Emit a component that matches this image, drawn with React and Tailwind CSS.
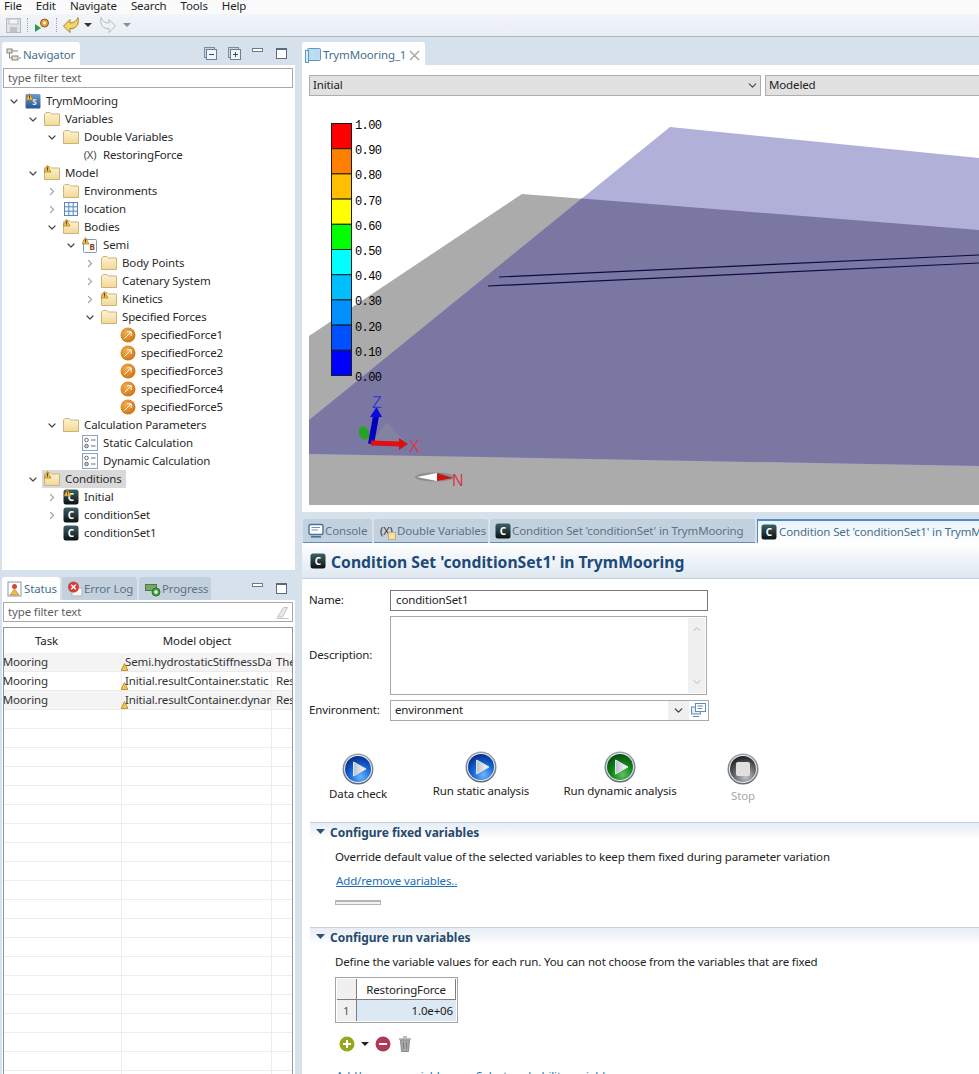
import { ChevronDown, ChevronRight, ChevronUp } from 'lucide-react';

const indents = ['pl-[6px]', 'pl-[25px]', 'pl-[44px]', 'pl-[63px]', 'pl-[82px]', 'pl-[101px]'];

const treeRows = [
  { level: 0, arrow: 'open', icon: 'root', label: 'TrymMooring' },
  { level: 1, arrow: 'open', icon: 'folder', label: 'Variables' },
  { level: 2, arrow: 'open', icon: 'folder', label: 'Double Variables' },
  { level: 3, icon: 'x', label: 'RestoringForce' },
  { level: 1, arrow: 'open', icon: 'warnFolder', label: 'Model' },
  { level: 2, arrow: 'closed', icon: 'folder', label: 'Environments' },
  { level: 2, arrow: 'closed', icon: 'grid', label: 'location' },
  { level: 2, arrow: 'open', icon: 'warnFolder', label: 'Bodies' },
  { level: 3, arrow: 'open', icon: 'body', label: 'Semi' },
  { level: 4, arrow: 'closed', icon: 'folder', label: 'Body Points' },
  { level: 4, arrow: 'closed', icon: 'folder', label: 'Catenary System' },
  { level: 4, arrow: 'closed', icon: 'warnFolder', label: 'Kinetics' },
  { level: 4, arrow: 'open', icon: 'folder', label: 'Specified Forces' },
  { level: 5, icon: 'force', label: 'specifiedForce1' },
  { level: 5, icon: 'force', label: 'specifiedForce2' },
  { level: 5, icon: 'force', label: 'specifiedForce3' },
  { level: 5, icon: 'force', label: 'specifiedForce4' },
  { level: 5, icon: 'force', label: 'specifiedForce5' },
  { level: 2, arrow: 'open', icon: 'folder', label: 'Calculation Parameters' },
  { level: 3, icon: 'calc', label: 'Static Calculation' },
  { level: 3, icon: 'calc', label: 'Dynamic Calculation' },
  { level: 1, arrow: 'open', icon: 'warnFolder', label: 'Conditions', selected: true },
  { level: 2, arrow: 'closed', icon: 'warnC', label: 'Initial' },
  { level: 2, arrow: 'closed', icon: 'c', label: 'conditionSet' },
  { level: 2, icon: 'c', label: 'conditionSet1' },
];

const legend = [
  ['#ff0000', '1.00'],
  ['#ff7f00', '0.90'],
  ['#ffbf00', '0.80'],
  ['#ffff00', '0.70'],
  ['#00ff00', '0.60'],
  ['#00ffff', '0.50'],
  ['#00bfff', '0.40'],
  ['#0090ff', '0.30'],
  ['#0050ff', '0.20'],
  ['#0000ff', '0.10'],
];

const statusRows = [
  { model: 'Semi.hydrostaticStiffnessData', info: 'The', shaded: true },
  { model: 'Initial.resultContainer.static', info: 'Res' },
  { model: 'Initial.resultContainer.dynamic', info: 'Res', shaded: true },
];

function WarnMark({ x = 0, y = 0 }) {
  return (
    <g transform={`translate(${x} ${y})`}>
      <path d="M3.5 0.5 L7 7 H0 Z" fill="#f6c445" stroke="#a9791a" strokeWidth="0.7" />
      <path d="M3.5 2.4 V4.8 M3.5 5.4 V6.2" stroke="#3a2a08" strokeWidth="0.9" />
    </g>
  );
}

function Folder({ warn }) {
  return (
    <svg className="shrink-0" width="16" height="16" viewBox="0 0 16 16">
      <defs>
        <linearGradient id="folderFill" x1="0" y1="0" x2="0" y2="1">
          <stop offset="0" stopColor="#fdf3d3" />
          <stop offset="1" stopColor="#f3d894" />
        </linearGradient>
      </defs>
      <path d="M0.5 14.5 V3 L2 1.5 H6 L7.5 3 H15.5 V14.5 Z" fill="url(#folderFill)" stroke="#cdb27a" />
      {warn && <WarnMark x={0} y={0} />}
    </svg>
  );
}

function CIcon({ warn }) {
  return (
    <svg className="shrink-0" width="16" height="16" viewBox="0 0 16 16">
      <defs>
        <linearGradient id="cFill" x1="0" y1="0" x2="0" y2="1">
          <stop offset="0" stopColor="#3d6066" />
          <stop offset="1" stopColor="#0b1214" />
        </linearGradient>
      </defs>
      <rect x="0.5" y="0.5" width="15" height="15" rx="2.5" fill="url(#cFill)" />
      <text x="8" y="12" textAnchor="middle" fontSize="10" fontWeight="700" fill="#fff" fontFamily="Noto Sans, sans-serif">C</text>
      {warn && <WarnMark x={1} y={0} />}
    </svg>
  );
}

function ForceIcon() {
  return (
    <svg className="shrink-0" width="16" height="16" viewBox="0 0 16 16">
      <defs>
        <radialGradient id="forceFill" cx="0.4" cy="0.35" r="0.75">
          <stop offset="0" stopColor="#f2ae4e" />
          <stop offset="1" stopColor="#c96d10" />
        </radialGradient>
      </defs>
      <circle cx="8" cy="8" r="7.5" fill="url(#forceFill)" />
      <path d="M4.5 11.5 L11 5 M7 4.8 H11.2 V9" fill="none" stroke="#fff" strokeWidth="1" />
    </svg>
  );
}

function CalcIcon() {
  return (
    <svg className="shrink-0" width="16" height="16" viewBox="0 0 16 16">
      <rect x="0.5" y="0.5" width="15" height="15" fill="#fbfcfe" stroke="#8ba3bc" />
      <circle cx="4.5" cy="5" r="1.8" fill="none" stroke="#6a6f76" />
      <circle cx="4.5" cy="11" r="1.8" fill="#c8ccd0" stroke="#6a6f76" />
      <path d="M9 5 H13.5 M9 11 H13.5" stroke="#6a6f76" />
    </svg>
  );
}

function GridIcon() {
  return (
    <svg className="shrink-0" width="16" height="16" viewBox="0 0 16 16">
      <rect x="1.5" y="1.5" width="13" height="13" fill="#f4f8fc" stroke="#5b86b8" />
      <path d="M5.8 1.5 V14.5 M10.2 1.5 V14.5 M1.5 5.8 H14.5 M1.5 10.2 H14.5" stroke="#5b86b8" />
    </svg>
  );
}

function RootIcon() {
  return (
    <svg className="shrink-0" width="16" height="16" viewBox="0 0 16 16">
      <defs>
        <linearGradient id="rootFill" x1="0" y1="0" x2="0" y2="1">
          <stop offset="0" stopColor="#6f9bd0" />
          <stop offset="1" stopColor="#24568f" />
        </linearGradient>
      </defs>
      <rect x="0.5" y="1" width="15" height="14.5" rx="1.5" fill="url(#rootFill)" />
      <text x="9.5" y="12" textAnchor="middle" fontSize="8" fontWeight="700" fill="#e8eef5" fontFamily="Noto Sans, sans-serif">S</text>
      <WarnMark x={1} y={0} />
    </svg>
  );
}

function BodyIcon() {
  return (
    <svg className="shrink-0" width="16" height="16" viewBox="0 0 16 16">
      <rect x="1.5" y="2.5" width="13" height="13" rx="1" fill="#fbfcfe" stroke="#7f9dbd" />
      <text x="10" y="12.5" textAnchor="middle" fontSize="8" fontWeight="700" fill="#8a3a2a" fontFamily="Noto Sans, sans-serif">B</text>
      <WarnMark x={0} y={0} />
    </svg>
  );
}

function TreeIcon({ kind }) {
  if (kind === 'folder') return <Folder />;
  if (kind === 'warnFolder') return <Folder warn />;
  if (kind === 'c') return <CIcon />;
  if (kind === 'warnC') return <CIcon warn />;
  if (kind === 'force') return <ForceIcon />;
  if (kind === 'calc') return <CalcIcon />;
  if (kind === 'grid') return <GridIcon />;
  if (kind === 'root') return <RootIcon />;
  if (kind === 'body') return <BodyIcon />;
  return <span className="block w-4 text-center text-[11px] leading-4 text-[#4a4a4a] whitespace-nowrap">(X)</span>;
}

function TreeRow({ row }) {
  return (
    <div className={`h-[18px] flex items-center ${indents[row.level]}`}>
      <span className="w-[12px] mr-[3px] shrink-0 flex justify-center">
        {row.arrow === 'open' && <ChevronDown size={13} strokeWidth={2.4} className="text-[#484848]" />}
        {row.arrow === 'closed' && <ChevronRight size={13} strokeWidth={2.4} className="text-[#a6a6a6]" />}
      </span>
      <span className={`flex items-center h-[18px] pl-[2px] pr-[4px] ${row.selected ? 'bg-[#d9d9d9]' : ''}`}>
        <TreeIcon kind={row.icon} />
        <span className="ml-[5px] text-[#2a2a2a] whitespace-nowrap">{row.label}</span>
      </span>
    </div>
  );
}

function WindowButtons() {
  return (
    <div className="flex items-center gap-[13px]">
      <svg className="mb-[6px]" width="11" height="5" viewBox="0 0 11 5"><rect x="0.5" y="0.5" width="10" height="3" fill="#fff" stroke="#6c7a88" /></svg>
      <svg width="11" height="11" viewBox="0 0 11 11"><rect x="0.5" y="0.5" width="10" height="10" fill="#fff" stroke="#5d6b79" /><path d="M0.5 1.5 H10.5" stroke="#5d6b79" /></svg>
    </div>
  );
}

function FilterInput({ clear }) {
  return (
    <div className="ml-[1px] mr-[2px] h-[20px] border border-[#a5a9ad] bg-white flex items-center pl-[4px] pr-[3px] justify-between text-[#5f5f5f]">
      <span>type filter text</span>
      {clear && (
        <svg width="13" height="13" viewBox="0 0 13 13">
          <path d="M1.5 11 L7.5 1.5 H11.5 L6.5 11 Z" fill="#e9e9e9" stroke="#c4c4c4" />
          <path d="M0.5 12.5 H12.5" stroke="#c4c4c4" />
        </svg>
      )}
    </div>
  );
}

function ViewTab({ active, icon, label, className = '' }) {
  return (
    <div className={`h-full rounded-t-[3px] flex items-center whitespace-nowrap shrink-0 ${active ? 'bg-white text-[#46708f]' : 'bg-[#c3d1de] text-[#5f7283]'} ${className}`}>
      {icon}
      <span className="ml-[1px]">{label}</span>
    </div>
  );
}

function NavigatorGlyph() {
  return (
    <svg className="shrink-0" width="16" height="16" viewBox="0 0 16 16">
      <rect x="1" y="2" width="5" height="4" fill="#f4dfa5" stroke="#7a8795" />
      <rect x="6" y="9" width="6" height="4" fill="#f4dfa5" stroke="#7a8795" />
      <path d="M3.5 6 V11 H6 M6 4 H12 M13 11 H15" stroke="#7a8795" fill="none" />
    </svg>
  );
}

function StatusGlyph() {
  return (
    <svg className="shrink-0" width="16" height="16" viewBox="0 0 16 16">
      <rect x="1" y="1" width="13" height="14" fill="#fff" stroke="#8a97a5" />
      <circle cx="7.5" cy="5.5" r="2.5" fill="#d8433b" />
      <path d="M7.5 8 L12 14 H3 Z" fill="#f3b94a" stroke="#a9791a" strokeWidth="0.6" />
    </svg>
  );
}

function ErrorGlyph() {
  return (
    <svg className="shrink-0" width="16" height="16" viewBox="0 0 16 16">
      <rect x="5" y="7" width="10" height="8" fill="#f4f4f4" stroke="#b8b8b8" />
      <circle cx="6.5" cy="6" r="5.5" fill="#d73c3c" />
      <path d="M4.2 3.7 L8.8 8.3 M8.8 3.7 L4.2 8.3" stroke="#fff" strokeWidth="1.5" />
    </svg>
  );
}

function ProgressGlyph() {
  return (
    <svg className="shrink-0" width="16" height="16" viewBox="0 0 16 16">
      <rect x="0.5" y="3.5" width="11" height="6" fill="#6fae5c" stroke="#5d6b5a" />
      <circle cx="11" cy="11" r="4" fill="#43a840" stroke="#2b6f2a" />
      <circle cx="11" cy="11" r="1.7" fill="#fff" />
    </svg>
  );
}

function EditorGlyph() {
  return (
    <svg className="shrink-0" width="16" height="16" viewBox="0 0 16 16">
      <rect x="2.5" y="1.5" width="13" height="12" rx="1" fill="#bcdcf2" stroke="#5d97c4" />
      <rect x="0.5" y="3.5" width="3" height="12" fill="#d7ebf8" stroke="#5d97c4" />
      <path d="M3.5 13.5 H14" stroke="#5d97c4" />
    </svg>
  );
}

function ConsoleGlyph() {
  return (
    <svg className="shrink-0" width="16" height="16" viewBox="0 0 16 16">
      <rect x="1" y="1.5" width="14" height="10" rx="1.5" fill="#fff" stroke="#44709c" strokeWidth="1.4" />
      <path d="M3.5 4.5 H12 M3.5 7 H10" stroke="#6d95bb" />
      <path d="M3 13.8 H13" stroke="#44709c" strokeWidth="1.6" />
    </svg>
  );
}

function VarsGlyph() {
  return (
    <span className="relative shrink-0 w-[16px] h-[16px] text-[11px] leading-4 text-[#333] whitespace-nowrap">
      (X)
      <svg className="absolute left-[8px] top-[9px]" width="8" height="8" viewBox="0 0 8 8">
        <rect x="0.5" y="0.5" width="7" height="7" fill="#f6e2a8" stroke="#c9ad6f" />
      </svg>
    </span>
  );
}

function PlayButton({ tone }) {
  const palettes = {
    blue: ['#6db4ff', '#1263d4', '#0a2b8a'],
    green: ['#5fc05c', '#0f8219', '#0a4d10'],
    gray: ['#c4c4c4', '#666666', '#202020'],
  };
  const [hi, mid, low] = palettes[tone];
  const id = `orb-${tone}`;
  return (
    <svg width="32" height="32" viewBox="0 0 32 32">
      <defs>
        <radialGradient id={id} cx="0.6" cy="0.8" r="0.8">
          <stop offset="0" stopColor={hi} />
          <stop offset="0.55" stopColor={mid} />
          <stop offset="1" stopColor={low} />
        </radialGradient>
        <linearGradient id="orbRing" x1="0" y1="0" x2="0" y2="1">
          <stop offset="0" stopColor="#9aa4ae" />
          <stop offset="1" stopColor="#5f6a75" />
        </linearGradient>
        <linearGradient id="orbPlay" x1="0" y1="0" x2="1" y2="0">
          <stop offset="0" stopColor="#b9c0c8" />
          <stop offset="1" stopColor="#ffffff" />
        </linearGradient>
      </defs>
      <circle cx="16" cy="16" r="15.5" fill="url(#orbRing)" />
      <circle cx="16" cy="16" r="14" fill="#e8ecef" />
      <circle cx="16" cy="16" r="13" fill={`url(#${id})`} />
      {tone === 'gray' ? (
        <rect x="9" y="9" width="14" height="14" rx="2" fill="#e0e0e0" />
      ) : (
        <path d="M11.5 9 L24 16 L11.5 23 Z" fill="url(#orbPlay)" strokeLinejoin="round" stroke="#dfe4ea" strokeWidth="1" />
      )}
    </svg>
  );
}

function RunAction({ tone, label, width, top, gap, muted }) {
  return (
    <div className={`flex flex-col items-center ${width} ${top}`}>
      <PlayButton tone={tone} />
      <span className={`leading-4 whitespace-nowrap ${gap} ${muted ? 'text-[#a8a8a8]' : 'text-[#222]'}`}>{label}</span>
    </div>
  );
}

function SectionHeader({ title }) {
  return (
    <div className="h-[18px] border-t border-[#c6d2dd] bg-gradient-to-b from-[#e6edf4] to-white flex items-center pl-[6px]">
      <svg width="9" height="5" viewBox="0 0 9 5"><path d="M0 0 H9 L4.5 5 Z" fill="#2b5379" /></svg>
      <span className="ml-[5px] pt-[2px] text-[12px] tracking-normal font-bold text-[#27496d]">{title}</span>
    </div>
  );
}

function Scene() {
  const legendFont = 'Liberation Mono, monospace';
  return (
    <svg className="block w-full h-full" viewBox="0 0 670 395">
      <path d="M0 226 L213 84 L670 120 V395 H0 Z" fill="#ababab" />
      <path d="M361 17 L670 48 V356 L0 344 V310 Z" fill="#b1b0d8" />
      <path d="M272.7 88.5 L670 120 V356 L0 344 V310 Z" fill="#7a78a3" />
      <path d="M190 167 L670 145" stroke="#0b0b45" strokeWidth="1.2" />
      <path d="M179 176 L670 153" stroke="#0b0b45" strokeWidth="1.2" />
      {legend.map(([color, value], i) => (
        <g key={value}>
          <rect x="22.5" y={13.5 + i * 25.2} width="20" height="25.2" fill={color} stroke="#1b1b1b" strokeWidth="1" />
          <text x="46" y={19 + i * 25.2} fontSize="12" letterSpacing="-0.6" fontFamily={legendFont} fill="#000">{value}</text>
        </g>
      ))}
      <text x="46" y="271" fontSize="12" letterSpacing="-0.6" fontFamily={legendFont} fill="#000">0.00</text>
      <path d="M62 333 L78 312 L98 334 Z" fill="#8f8fa0" fillOpacity="0.45" />
      <ellipse cx="55" cy="323" rx="5" ry="7" fill="#24a324" transform="rotate(-25 55 323)" />
      <path d="M62 334 L67 306" stroke="#0000c0" strokeWidth="6" />
      <path d="M61 307 L67.5 297 L73 307 Z" fill="#0a0ae0" />
      <path d="M62 333 L92 334" stroke="#e01010" strokeWidth="5" />
      <path d="M90 328 L99 334 L90 340 Z" fill="#d81010" />
      <text x="63" y="298" fontSize="16" fill="#3a3ad8" fontFamily="Liberation Sans, sans-serif">Z</text>
      <text x="100" y="342" fontSize="16" fill="#d83a4a" fontFamily="Liberation Sans, sans-serif">X</text>
      <ellipse cx="126" cy="367" rx="20" ry="4.5" fill="#8f8f8f" />
      <path d="M108 367 L128 363 L128 371 Z" fill="#fff" />
      <path d="M128 363 L144 368 L128 371 Z" fill="#c81414" />
      <text x="143" y="376" fontSize="16" fill="#d83a4a" fontFamily="Liberation Sans, sans-serif">N</text>
    </svg>
  );
}

export default function App() {
  return (
    <div className="w-[979px] h-[1074px] overflow-hidden flex flex-col bg-[#d6e1ec] text-[11.5px] tracking-[-0.14px] leading-4 text-[#222] font-['Noto_Sans',sans-serif]">
      <div className="h-[14px] shrink-0 bg-[#fafafa] overflow-hidden flex gap-[14px] pl-[4px] items-end text-[#1f1f1f]">
        {['File', 'Edit', 'Navigate', 'Search', 'Tools', 'Help'].map((item) => (
          <span key={item} className="leading-[14px] mb-[1px]">{item}</span>
        ))}
      </div>

      <div className="h-[23px] shrink-0 bg-gradient-to-b from-[#f2f5fa] to-[#e9eef5] border-b border-[#aab8c6] flex items-center pl-[6px]">
        <svg width="15" height="15" viewBox="0 0 15 15"><rect x="0.5" y="0.5" width="14" height="14" fill="#dfe3e7" stroke="#b4babf" /><rect x="3" y="1" width="9" height="5" fill="#f3f4f5" stroke="#bcc1c6" /><rect x="4" y="9" width="7" height="5" fill="#bcc2c8" /></svg>
        <span className="ml-[6px] w-px h-[14px] border-l border-dotted border-[#9aa5b0]" />
        <svg className="ml-[6px]" width="16" height="16" viewBox="0 0 16 16"><path d="M1 7 L7 11 L1 15 Z" fill="#2f9a4a" /><circle cx="10.5" cy="6" r="4" fill="#e9a23c" stroke="#8a5a14" /><circle cx="10.5" cy="6" r="1.4" fill="#fff" /></svg>
        <span className="ml-[6px] w-px h-[14px] border-l border-dotted border-[#9aa5b0]" />
        <svg className="ml-[5px]" width="18" height="18" viewBox="0 0 18 18"><path d="M1.5 10 L8 3.5 V7 C12 7 14.5 5 16 1.5 C17.5 8 14 13.5 8 12.5 V16.5 Z" fill="#f5d36c" stroke="#a98625" strokeLinejoin="round" /></svg>
        <svg className="ml-[4px]" width="8" height="4" viewBox="0 0 8 4"><path d="M0 0 H8 L4 4 Z" fill="#333" /></svg>
        <svg className="ml-[7px]" width="18" height="18" viewBox="0 0 18 18"><path d="M16.5 10 L10 3.5 V7 C6 7 3.5 5 2 1.5 C0.5 8 4 13.5 10 12.5 V16.5 Z" fill="#eef1f4" stroke="#b4bcc4" strokeLinejoin="round" /></svg>
        <svg className="ml-[6px]" width="8" height="4" viewBox="0 0 8 4"><path d="M0 0 H8 L4 4 Z" fill="#8b8f94" /></svg>
      </div>

      <div className="flex-1 min-h-0 flex">
        <div className="w-[295px] shrink-0 pl-[2px] pt-[5px] flex flex-col">
          <div className="h-[23px] flex items-center justify-between pr-[8px]">
            <ViewTab active icon={<NavigatorGlyph />} label="Navigator" className="w-[78px] pl-[4px] pt-[3px]" />
            <div className="flex items-center gap-[11px]">
              <svg width="13" height="13" viewBox="0 0 13 13"><rect x="0.5" y="0.5" width="10" height="10" fill="#c9d6e3" stroke="#7d8d9c" /><rect x="2.5" y="2.5" width="10" height="10" fill="#f1f5f9" stroke="#62809c" /><path d="M5 7.5 H10" stroke="#35506b" /></svg>
              <svg width="13" height="13" viewBox="0 0 13 13"><rect x="0.5" y="0.5" width="10" height="10" fill="#c9d6e3" stroke="#7d8d9c" /><rect x="2.5" y="2.5" width="10" height="10" fill="#f1f5f9" stroke="#62809c" /><path d="M5 7.5 H10 M7.5 5 V10" stroke="#35506b" /></svg>
              <WindowButtons />
            </div>
          </div>
          <div className="h-[505px] shrink-0 bg-white pt-[3px]">
            <FilterInput />
            <div className="mt-[4px]">
              {treeRows.map((row) => (
                <TreeRow key={row.label} row={row} />
              ))}
            </div>
          </div>

          <div className="mt-[7px] h-[23px] shrink-0 flex items-center justify-between pr-[8px]">
            <div className="flex gap-[2px] h-full">
              <ViewTab active icon={<StatusGlyph />} label="Status" className="w-[58px] pl-[5px] pt-px" />
              <ViewTab icon={<ErrorGlyph />} label="Error Log" className="w-[75px] pl-[5px] pt-px" />
              <ViewTab icon={<ProgressGlyph />} label="Progress" className="w-[72px] pl-[6px] pt-px" />
            </div>
            <WindowButtons />
          </div>
          <div className="flex-1 min-h-0 bg-white pt-[2px] flex flex-col">
            <FilterInput clear />
            <div className="mt-[5px] ml-[1px] w-[290px] flex-1 min-h-0 border border-b-0 border-[#8d949b] overflow-hidden relative">
              <div className="h-[25px] flex items-center pt-px text-[#222]">
                <span className="w-[118px] pr-[33px] text-center">Task</span>
                <span className="w-[150px] text-center">Model object</span>
              </div>
              {statusRows.map((row) => (
                <div key={row.info + row.model} className={`relative h-[19px] flex items-center overflow-hidden border-b border-[#ececec] text-[#333] ${row.shaded ? 'bg-[#f4f4f4]' : 'bg-white'}`}>
                  <span className="w-[118px] shrink-0 overflow-hidden border-r border-[#ececec]"><span className="block -ml-[28px] whitespace-nowrap">TrymMooring</span></span>
                  <span className="w-[150px] shrink-0 overflow-hidden whitespace-nowrap pl-[3px] border-r border-[#ececec]">{row.model}</span>
                  <span className="pl-[4px]">{row.info}</span>
                  <svg className="absolute left-[117px] top-[10px]" width="7" height="8" viewBox="0 0 7 8"><path d="M3.5 0.5 L7 7.5 H0 Z" fill="#f6c445" stroke="#a9791a" strokeWidth="0.7" /></svg>
                </div>
              ))}
              {Array.from({ length: 20 }, (_, i) => (
                <div key={i} className="h-[19px] flex border-b border-[#ececec]">
                  <span className="w-[118px] shrink-0 border-r border-[#ececec]" />
                  <span className="w-[150px] shrink-0 border-r border-[#ececec]" />
                </div>
              ))}
            </div>
          </div>
        </div>

        <div className="flex-1 min-w-0 ml-[7px] pt-[5px] flex flex-col">
          <div className="h-[23px] shrink-0 flex">
            <div className="w-[123px] h-[23px] rounded-t-[3px] bg-white text-[#46708f] flex items-center pl-[3px] pt-[3px] whitespace-nowrap">
              <EditorGlyph />
              <span className="ml-[2px]">TrymMooring_1</span>
              <svg className="ml-[3px] shrink-0" width="11" height="11" viewBox="0 0 11 11"><path d="M1 1 L10 10 M10 1 L1 10" stroke="#a9a9a9" strokeWidth="1.5" /></svg>
            </div>
          </div>
          <div className="h-[447px] shrink-0 bg-white pt-[10px] pl-[7px] flex flex-col">
            <div className="h-[21px] flex gap-[4px]">
              <div className="w-[452px] shrink-0 border border-[#adadad] bg-[#e1e1e1] flex items-center justify-between pl-[3px] pr-[1px]">
                <span className="pb-[2px]">Initial</span>
                <ChevronDown size={13} className="text-[#444]" />
              </div>
              <div className="w-[230px] shrink-0 border border-[#adadad] bg-[#e1e1e1] flex items-center pl-[3px]">
                <span className="pb-[2px]">Modeled</span>
              </div>
            </div>
            <div className="mt-[14px] h-[395px]">
              <Scene />
            </div>
          </div>

          <div className="mt-[7px] h-[24px] shrink-0 flex gap-[2px] pl-[1px] overflow-hidden">
            <ViewTab icon={<ConsoleGlyph />} label="Console" className="w-[69px] pl-[5px] pt-px border-b border-[#5f8db3]" />
            <ViewTab icon={<VarsGlyph />} label="Double Variables" className="w-[114px] pl-[6px] pt-px border-b border-[#5f8db3]" />
            <ViewTab icon={<CIcon />} label="Condition Set 'conditionSet' in TrymMooring" className="w-[265px] pl-[5px] pt-px border-b border-[#5f8db3]" />
            <div className="h-full flex-1 min-w-0 border-t-2 border-l border-[#4f8cc4] bg-gradient-to-b from-[#eaf3fb] to-white text-[#46708f] flex items-center pl-[3px] whitespace-nowrap overflow-hidden">
              <CIcon />
              <span className="ml-[2px]">Condition Set 'conditionSet1' in TrymMooring</span>
            </div>
          </div>

          <div className="flex-1 min-h-0 bg-white overflow-hidden">
            <div className="h-[36px] bg-gradient-to-b from-white to-[#dfe8f0] border-b border-[#c3cbd3] flex items-center pl-[8px]">
              <CIcon />
              <span className="ml-[5px] pt-[3px] text-[15.7px] tracking-normal font-bold text-[#1c4a79] whitespace-nowrap">Condition Set 'conditionSet1' in TrymMooring</span>
            </div>

            <div className="mt-[11px] pl-[7px] flex items-center h-[21px]">
              <span className="w-[81px] pb-[2px]">Name:</span>
              <div className="w-[318px] h-[21px] border border-[#7a7a7a] flex items-center pl-[5px] pb-[2px]">conditionSet1</div>
            </div>
            <div className="mt-[5px] pl-[7px] flex items-center h-[79px]">
              <span className="w-[81px] pb-[2px]">Description:</span>
              <div className="w-[317px] h-[79px] border border-[#a8a8a8] flex justify-end p-px">
                <div className="w-[17px] bg-[#f0f0f0] flex flex-col justify-between items-center py-[5px]">
                  <ChevronUp size={12} className="text-[#b5b5b5]" />
                  <ChevronDown size={12} className="text-[#b5b5b5]" />
                </div>
              </div>
            </div>
            <div className="mt-[5px] pl-[7px] flex items-center h-[21px]">
              <span className="w-[81px] pb-[2px]">Environment:</span>
              <div className="w-[319px] h-[21px] border border-[#a8a8a8] flex items-center pl-[4px]">
                <span className="flex-1 pb-[2px]">environment</span>
                <span className="w-[21px] h-[19px] bg-[#f0f0f0] flex items-center justify-center">
                  <ChevronDown size={13} strokeWidth={2.6} className="text-[#444]" />
                </span>
                <svg className="mx-[1px]" width="17" height="17" viewBox="0 0 17 17"><rect x="1.5" y="5" width="9" height="7" fill="#e4edf5" stroke="#5d8fb8" /><rect x="5.5" y="1.5" width="10" height="8" fill="#fff" stroke="#5d8fb8" /><path d="M7.5 4 H13 M7.5 6.5 H12 M3 14.5 H9" stroke="#5d8fb8" /></svg>
              </div>
            </div>

            <div className="mt-[30px] h-[71px] pl-[7px] flex">
              <RunAction tone="blue" label="Data check" width="w-[98px]" top="pt-[2px]" gap="mt-px" />
              <RunAction tone="blue" label="Run static analysis" width="w-[148px]" top="" gap="" />
              <RunAction tone="green" label="Run dynamic analysis" width="w-[130px]" top="" gap="" />
              <RunAction tone="gray" label="Stop" width="w-[116px]" top="pt-[2px]" gap="mt-[3px]" muted />
            </div>

            <div className="ml-[8px]">
              <SectionHeader title="Configure fixed variables" />
              <div className="pl-[25px]">
                <p className="mt-[9px] whitespace-nowrap">Override default value of the selected variables to keep them fixed during parameter variation</p>
                <p className="mt-[8px] ml-px text-[#1a6fb5] underline">Add/remove variables..</p>
                <div className="mt-[11px] w-[46px] h-[5px] border border-[#b5b5b5] bg-[#f2f2f2] border-t-2" />
              </div>

              <div className="mt-[22px]">
                <SectionHeader title="Configure run variables" />
              </div>
              <div className="pl-[25px]">
                <p className="mt-[9px] whitespace-nowrap">Define the variable values for each run. You can not choose from the variables that are fixed</p>
                <div className="mt-[7px] w-[123px] h-[46px] border border-[#a5a5a5] p-px">
                  <div className="h-[21px] flex border-b border-[#7f7f7f]">
                    <span className="w-[20px] bg-[#f0f0f0] border-r border-[#7f7f7f]" />
                    <span className="flex-1 text-center leading-[22px] border-r border-[#7f7f7f]">RestoringForce</span>
                  </div>
                  <div className="h-[21px] flex">
                    <span className="w-[20px] bg-[#f0f0f0] border-r border-[#7f7f7f] pl-[6px] leading-[22px] text-[#555]">1</span>
                    <span className="flex-1 bg-[#dce8f3] text-right pr-[3px] leading-[22px]">1.0e+06</span>
                  </div>
                </div>
                <div className="mt-[13px] h-[16px] flex items-center pl-[4px]">
                  <svg width="16" height="16" viewBox="0 0 16 16"><circle cx="8" cy="8" r="7.5" fill="#9aa51f" /><path d="M8 4 V12 M4 8 H12" stroke="#fff" strokeWidth="2" /></svg>
                  <svg className="ml-[6px]" width="8" height="4" viewBox="0 0 8 4"><path d="M0 0 H8 L4 4 Z" fill="#222" /></svg>
                  <svg className="ml-[6px]" width="16" height="16" viewBox="0 0 16 16"><circle cx="8" cy="8" r="7.5" fill="#b03a56" /><path d="M4 8 H12" stroke="#fff" strokeWidth="2" /></svg>
                  <svg className="ml-[7px]" width="14" height="16" viewBox="0 0 14 16"><path d="M2.5 4 H11.5 L10.5 15.5 H3.5 Z" fill="#a8a8a8" stroke="#8c8c8c" /><path d="M1 3 H13 M5 1 H9 M5.5 6 V13 M8.5 6 V13" stroke="#7f7f7f" /></svg>
                </div>
                <div className="mt-[16px] ml-px flex gap-[19px] text-[#1a6fb5] whitespace-nowrap">
                  <span className="underline">Add/remove variables..</span>
                  <span className="underline">Select probability variables</span>
                </div>
              </div>
            </div>
          </div>
        </div>
      </div>
    </div>
  );
}
